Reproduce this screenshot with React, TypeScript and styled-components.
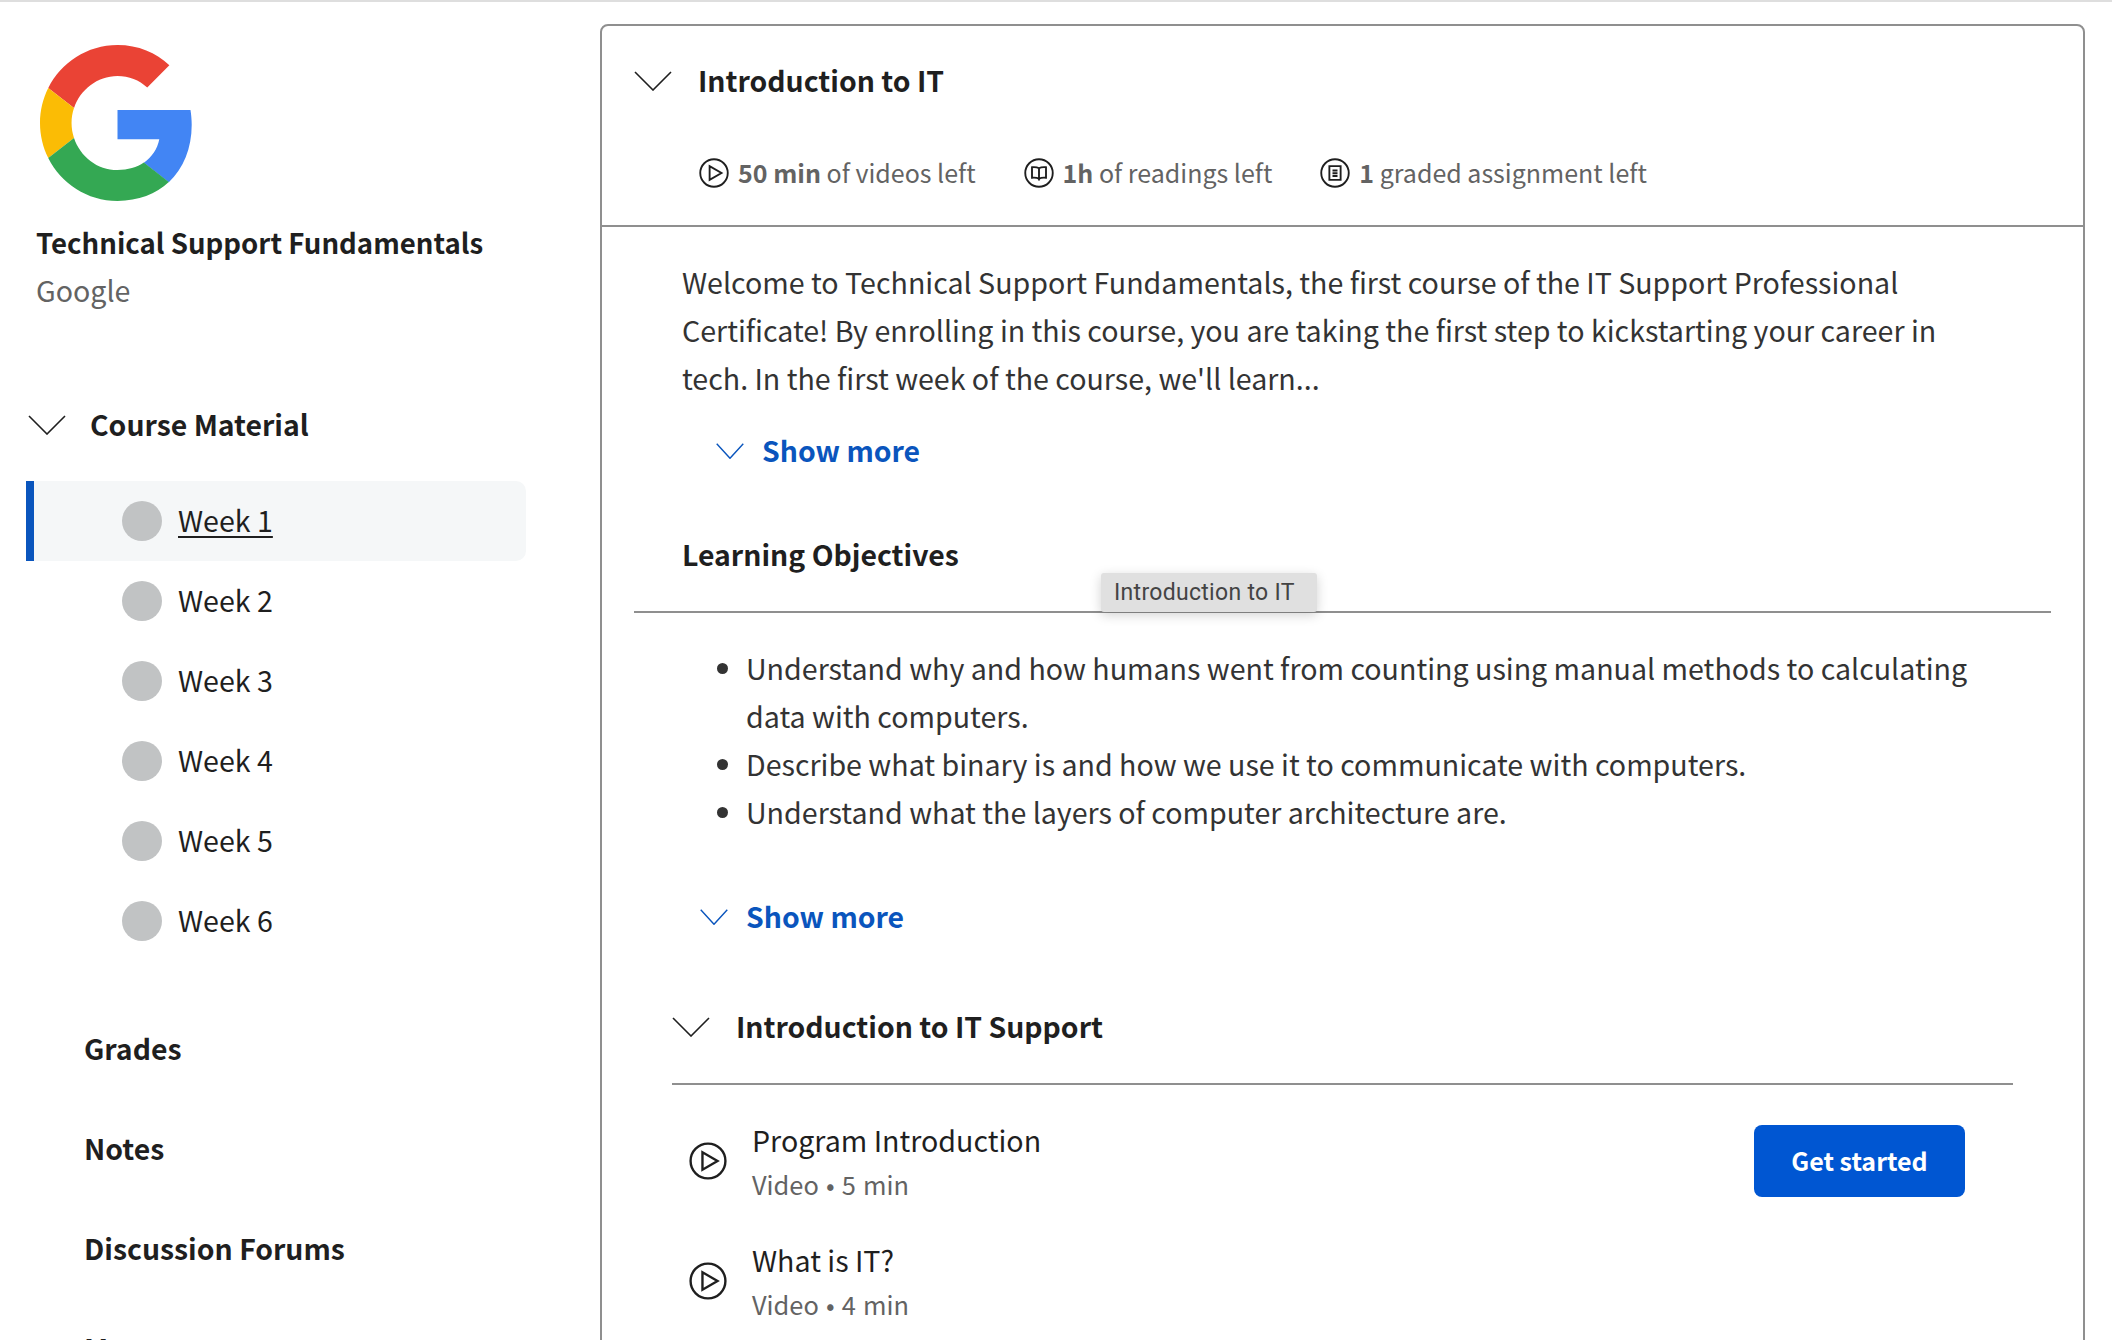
import React from 'react';
import styled, { createGlobalStyle } from 'styled-components';

const Global = createGlobalStyle`
  html, body { margin: 0; padding: 0; height: 1340px; overflow: hidden; background: #fff; }
  body { font-family: "Noto Sans CJK JP", "Open Sans", sans-serif; color: #1f1f1f; }
  * { box-sizing: border-box; }
`;
const Page = styled.div`height: 1340px; overflow: hidden;`;
const TopBar = styled.div`height: 2px; background: #dedede;`;
const Layout = styled.div`display: flex; align-items: flex-start;`;
const Sidebar = styled.aside`flex: none; width: 600px; padding: 43px 0 0 0;`;
const Logo = styled.svg`display: block; width: 155px; height: 156px; margin-left: 40px;`;
const CourseTitle = styled.div`margin: 17px 0 0 36px; font-size: 27.6px; line-height: 48px; font-weight: 600; white-space: nowrap;`;
const Partner = styled.div`margin: 0 0 0 36px; font-size: 28.6px; line-height: 48px; color: #636363;`;
const NavHead = styled.div`display: flex; align-items: center; margin: 86px 0 0 28px; font-size: 28.4px; line-height: 48px; font-weight: 600;`;
const NavChevron = styled.svg`flex: none; width: 38px; height: 20px; margin: 2px 24px 0 0; fill: none; stroke: #1f1f1f; stroke-width: 1.6;`;
const WeekList = styled.div`margin: 33px 0 0 26px; width: 500px;`;
const WeekRow = styled.div<{ $active?: boolean }>`
  height: 80px; display: flex; align-items: center; padding-left: 96px; gap: 16px;
  font-size: 28.6px; line-height: 48px;
  ${p => p.$active ? `background: #f5f7f8; border-left: 8px solid #0a55bd; padding-left: 88px; border-radius: 0 10px 10px 0;` : ''}
`;
const Dot = styled.span`flex: none; width: 40px; height: 40px; border-radius: 50%; background: #c1c3c4;`;
const WeekLabel = styled.span<{ $active?: boolean }>`
  padding-bottom: 2px;
  ${p => p.$active ? 'text-decoration: underline; text-underline-offset: 4px; text-decoration-thickness: 2px;' : ''}
`;
const NavLinks = styled.div`margin: 39px 0 0 84px;`;
const NavLink = styled.div`height: 100px; padding-top: 24px; font-size: 28.4px; line-height: 48px; font-weight: 600;`;

const Main = styled.main`flex: none; width: 1485px; min-height: 1400px; margin-top: 22px; border: 2px solid #8f8f8f; border-radius: 8px 8px 0 0;`;
const CardHeader = styled.header`padding: 30px 32px 33px; border-bottom: 2px solid #8f8f8f;`;
const TitleRow = styled.div`display: flex; align-items: center; font-size: 28.4px; line-height: 48px; font-weight: 600;`;
const TitleChevron = styled.svg`flex: none; width: 38px; height: 20px; margin: 2px 26px 0 0; fill: none; stroke: #1f1f1f; stroke-width: 1.6;`;
const Stats = styled.div`display: flex; gap: 48px; margin: 48px 0 0 65px; font-size: 25px; line-height: 40px; color: #636363;`;
const Stat = styled.div`display: flex; align-items: center; gap: 9px;`;
const StatIcon = styled.svg`flex: none; width: 30px; height: 30px; margin-top: 1px; fill: none; stroke: #1f1f1f; stroke-width: 1.5;`;
const Strong = styled.b`font-weight: 600;`;
const Body = styled.div`padding: 31px 32px 0;`;
const Desc = styled.p`margin: 0 0 0 48px; width: 1310px; font-size: 28.6px; line-height: 48px; color: #333;`;
const ShowMore = styled.div<{ $indent: number }>`
  display: flex; align-items: center; gap: 18px; margin-left: ${p => p.$indent}px;
  font-size: 28.4px; line-height: 48px; font-weight: 600; color: #0a55bd;
`;
const ShowMoreIcon = styled.svg`flex: none; width: 28px; height: 16px; margin-top: 2px; fill: none; stroke: #0a55bd; stroke-width: 2;`;
const FirstShowMore = styled.div`margin-top: 24px;`;
const ObjectivesHead = styled.div`position: relative; margin-top: 56px; padding: 0 0 33px 48px; border-bottom: 2px solid #8f8f8f; font-size: 28.4px; line-height: 48px; font-weight: 600;`;
const Tooltip = styled.div`
  position: absolute; left: 467px; bottom: -1px; width: 216px; height: 39px; padding-left: 13px;
  background: #e0e0e0; border-radius: 3px; box-shadow: 0 3px 12px rgba(0,0,0,.18);
  font-family: "Roboto", sans-serif; font-size: 23px; font-weight: 400; line-height: 39px; letter-spacing: .3px; color: #444;
`;
const Bullets = styled.ul`margin: 31px 0 0 0; padding: 0 0 0 112px; width: 1380px; font-size: 28.6px; line-height: 48px; color: #333;`;
const SecondShowMore = styled.div`margin-top: 56px;`;
const Section = styled.section`margin: 62px 38px 0;`;
const SectionHead = styled.div`display: flex; align-items: center; padding-bottom: 33px; border-bottom: 2px solid #8f8f8f; font-size: 28.4px; line-height: 48px; font-weight: 600;`;
const Items = styled.div`padding-top: 20px;`;
const Item = styled.div`display: flex; align-items: center; padding: 13px 48px 17px 17px;`;
const PlayIcon = styled.svg`flex: none; width: 38px; height: 38px; margin: 0 25px 4px 0; fill: none; stroke: #1f1f1f; stroke-width: 1.5;`;
const ItemText = styled.div`flex: 1; margin-bottom: 2px;`;
const ItemTitle = styled.div`font-size: 28.6px; line-height: 44px;`;
const ItemMeta = styled.div`font-size: 25.4px; line-height: 44px; color: #636363; word-spacing: 1.5px;`;
const Button = styled.button`
  flex: none; width: 211px; height: 72px; margin-bottom: 4px; padding: 0 0 2px; border: 0; border-radius: 8px; background: #0056d2; color: #fff;
  font-family: inherit; font-size: 25px; font-weight: 600;
`;

const Chevron = () => <polyline points="1,1 19,19 37,1" />;
const Play = () => (<><circle cx="12" cy="12" r="11" /><polygon points="8.5,6.5 8.5,17.5 18,12" /></>);

const weeks = ['Week 1', 'Week 2', 'Week 3', 'Week 4', 'Week 5', 'Week 6'];

export default function App() {
  return (
    <Page>
      <Global />
      <TopBar />
      <Layout>
        <Sidebar>
          <Logo viewBox="0 0 48 48" preserveAspectRatio="none">
            <path fill="#EA4335" d="M24 9.5c3.54 0 6.71 1.22 9.21 3.6l6.85-6.85C35.9 2.38 30.47 0 24 0 14.62 0 6.51 5.38 2.56 13.22l7.98 6.19C12.43 13.72 17.74 9.5 24 9.5z" />
            <path fill="#4285F4" d="M46.98 24.55c0-1.57-.15-3.09-.38-4.55H24v9.02h12.94c-.58 2.96-2.26 5.48-4.78 7.18l7.73 6c4.51-4.18 7.09-10.36 7.09-17.65z" />
            <path fill="#FBBC05" d="M10.53 28.59c-.48-1.45-.76-2.99-.76-4.59s.27-3.14.76-4.59l-7.98-6.19C.92 16.46 0 20.12 0 24c0 3.88.92 7.54 2.56 10.78l7.97-6.19z" />
            <path fill="#34A853" d="M24 48c6.48 0 11.93-2.13 15.89-5.81l-7.73-6c-2.15 1.45-4.92 2.3-8.16 2.3-6.26 0-11.57-4.22-13.47-9.91l-7.98 6.19C6.51 42.62 14.62 48 24 48z" />
          </Logo>
          <CourseTitle>Technical Support Fundamentals</CourseTitle>
          <Partner>Google</Partner>
          <NavHead>
            <NavChevron viewBox="0 0 38 20"><Chevron /></NavChevron>
            Course Material
          </NavHead>
          <WeekList>
            {weeks.map((w, i) => (
              <WeekRow key={w} $active={i === 0}>
                <Dot />
                <WeekLabel $active={i === 0}>{w}</WeekLabel>
              </WeekRow>
            ))}
          </WeekList>
          <NavLinks>
            <NavLink>Grades</NavLink>
            <NavLink>Notes</NavLink>
            <NavLink>Discussion Forums</NavLink>
            <NavLink>Messages</NavLink>
          </NavLinks>
        </Sidebar>
        <Main>
          <CardHeader>
            <TitleRow>
              <TitleChevron viewBox="0 0 38 20"><Chevron /></TitleChevron>
              Introduction to IT
            </TitleRow>
            <Stats>
              <Stat>
                <StatIcon viewBox="0 0 24 24"><Play /></StatIcon>
                <span><Strong>50 min</Strong> of videos left</span>
              </Stat>
              <Stat>
                <StatIcon viewBox="0 0 24 24">
                  <circle cx="12" cy="12" r="11" />
                  <path d="M12 8.2C10.6 7.4 8.5 7.2 6.4 7.4v8.4c2.1-.2 4.2 0 5.6.8 1.4-.8 3.5-1 5.6-.8V7.4c-2.1-.2-4.2 0-5.6.8zM12 8.2v9.8" />
                </StatIcon>
                <span><Strong>1h</Strong> of readings left</span>
              </Stat>
              <Stat>
                <StatIcon viewBox="0 0 24 24">
                  <circle cx="12" cy="12" r="11" />
                  <path d="M7.5 6.5h9v11h-9zM10 10h4M10 12.2h4M10 14.4h4" />
                </StatIcon>
                <span><Strong>1</Strong> graded assignment left</span>
              </Stat>
            </Stats>
          </CardHeader>
          <Body>
            <Desc>
              Welcome to Technical Support Fundamentals, the first course of the IT Support Professional Certificate! By enrolling in this course, you are taking the first step to kickstarting your career in tech. In the first week of the course, we'll learn...
            </Desc>
            <FirstShowMore>
              <ShowMore $indent={82}>
                <ShowMoreIcon viewBox="0 0 38 20" preserveAspectRatio="none"><Chevron /></ShowMoreIcon>
                Show more
              </ShowMore>
            </FirstShowMore>
            <ObjectivesHead>
              Learning Objectives
              <Tooltip>Introduction to IT</Tooltip>
            </ObjectivesHead>
            <Bullets>
              <li>Understand why and how humans went from counting using manual methods to calculating data with computers.</li>
              <li>Describe what binary is and how we use it to communicate with computers.</li>
              <li>Understand what the layers of computer architecture are.</li>
            </Bullets>
            <SecondShowMore>
              <ShowMore $indent={66}>
                <ShowMoreIcon viewBox="0 0 38 20" preserveAspectRatio="none"><Chevron /></ShowMoreIcon>
                Show more
              </ShowMore>
            </SecondShowMore>
            <Section>
              <SectionHead>
                <TitleChevron viewBox="0 0 38 20"><Chevron /></TitleChevron>
                Introduction to IT Support
              </SectionHead>
              <Items>
                <Item>
                  <PlayIcon viewBox="0 0 24 24"><Play /></PlayIcon>
                  <ItemText>
                    <ItemTitle>Program Introduction</ItemTitle>
                    <ItemMeta>Video • 5 min</ItemMeta>
                  </ItemText>
                  <Button>Get started</Button>
                </Item>
                <Item>
                  <PlayIcon viewBox="0 0 24 24"><Play /></PlayIcon>
                  <ItemText>
                    <ItemTitle>What is IT?</ItemTitle>
                    <ItemMeta>Video • 4 min</ItemMeta>
                  </ItemText>
                </Item>
              </Items>
            </Section>
          </Body>
        </Main>
      </Layout>
    </Page>
  );
}
